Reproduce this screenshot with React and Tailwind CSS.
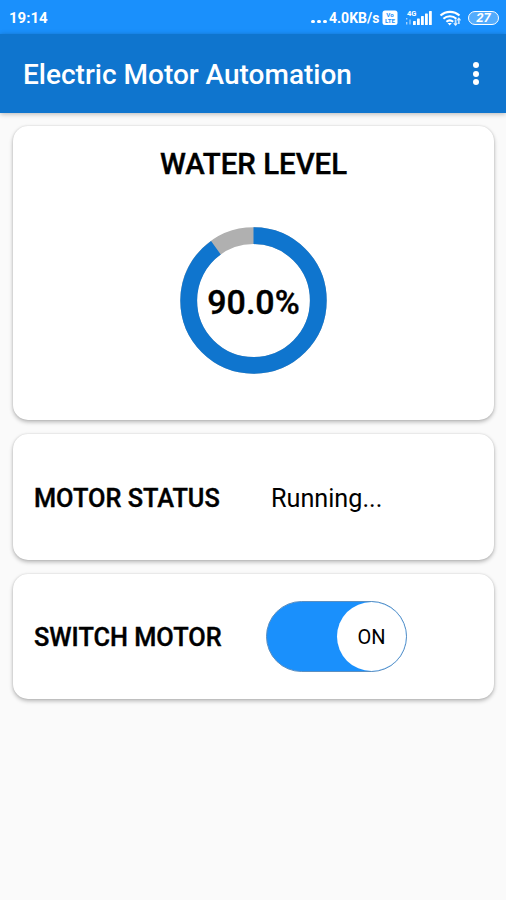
import React, { useState } from 'react';

const RING_RADIUS = 64.8;
const RING_LENGTH = 2 * Math.PI * RING_RADIUS;

const SignalIcon = () => (
  <svg width="28" height="18" viewBox="0 0 28 18" fill="#fff">
    <text x="2" y="6.8" fontSize="7.5" fontWeight="700" fontFamily="Roboto, sans-serif">4G</text>
    <path d="M1 9h1.4v1.6H1zM1 13h1.4v2.6H1zM4.4 10.5h1.2v5.1H4.4z" opacity="0.6" />
    <rect x="8" y="12" width="2.8" height="4" rx="0.6" />
    <rect x="12" y="9.5" width="2.8" height="6.5" rx="0.6" />
    <rect x="16" y="7" width="2.8" height="9" rx="0.6" />
    <rect x="20" y="4.5" width="2.8" height="11.5" rx="0.6" />
    <rect x="24" y="2" width="2.8" height="14" rx="0.6" />
  </svg>
);

const WifiIcon = () => (
  <svg width="24" height="18" viewBox="0 0 24 18" fill="none" stroke="#fff" strokeWidth="2.1">
    <path d="M1.5 6.6a14 14 0 0 1 19 0" />
    <path d="M4.4 9.8a9.6 9.6 0 0 1 13 0" />
    <path d="M7.4 12.8a5.2 5.2 0 0 1 6.8 0" />
    <path d="M8.6 14h4.2l-2.1 2.6z" fill="#fff" stroke="none" />
    <path d="M16.6 10.5v5.5M19.8 15v-5.5" strokeWidth="1.8" opacity="0.75" />
    <path d="M14.8 14.2l1.8 2 1.6-2M18.2 11.3l1.6-2 1.8 2" strokeWidth="1.2" opacity="0.75" />
  </svg>
);

const StatusBar = () => (
  <div className="flex h-[34px] items-center bg-[#1a90fc] pt-px pl-[9px] text-white">
    <span className="w-[302px] text-[15px] leading-[18px] font-bold">19:14</span>
    <span className="flex w-[18px] gap-[2.5px] pt-2">
      <span className="size-[3.5px] rounded-full bg-white" />
      <span className="size-[3.5px] rounded-full bg-white" />
      <span className="size-[3.5px] rounded-full bg-white" />
    </span>
    <span className="w-[53px] text-[14px] leading-[18px] font-bold whitespace-nowrap">4.0KB/s</span>
    <svg width="16" height="16" viewBox="0 0 16 16">
      <rect x="0.5" y="0.5" width="15" height="14.5" rx="2.5" fill="#fff" />
      <text x="8" y="7" textAnchor="middle" fontSize="6.2" fontWeight="700" fill="#1a90fc" fontFamily="Roboto, sans-serif">Vo</text>
      <text x="8" y="13.4" textAnchor="middle" fontSize="6.2" fontWeight="700" fill="#1a90fc" fontFamily="Roboto, sans-serif">LTE</text>
    </svg>
    <span className="ml-[7px]"><SignalIcon /></span>
    <span className="ml-[6px]"><WifiIcon /></span>
    <span className="ml-[5px] flex h-[14px] w-[31px] items-center justify-center rounded-full border-[1.5px] border-white bg-white/25 text-[13px] leading-none font-bold italic">
      27
    </span>
  </div>
);

const AppBar = () => (
  <header className="relative flex h-[79px] items-center justify-between bg-[#0f75ce] pr-[27px] pl-[23px] text-white shadow-[0_1px_5px_rgba(0,0,0,0.28)]">
    <h1 className="pt-[3px] text-[28px] leading-8 font-medium whitespace-nowrap">Electric Motor Automation</h1>
    <button className="flex flex-col gap-[2.5px]" aria-label="Menu">
      <span className="size-[6px] rounded-full bg-white" />
      <span className="size-[6px] rounded-full bg-white" />
      <span className="size-[6px] rounded-full bg-white" />
    </button>
  </header>
);

const Card = ({ className = '', children }) => (
  <section className={`rounded-[15px] bg-white shadow-[0_2px_4px_rgba(0,0,0,0.28),0_0_2px_rgba(0,0,0,0.12)] ${className}`}>
    {children}
  </section>
);

const WaterLevel = ({ level }) => (
  <div className="mt-[47px] grid place-items-center">
    <svg className="col-start-1 row-start-1 -rotate-90" width="147" height="147" viewBox="0 0 147 147" fill="none" strokeWidth="16.8">
      <circle cx="73.5" cy="73.5" r={RING_RADIUS} stroke="#b0b0b0" />
      <circle
        cx="73.5"
        cy="73.5"
        r={RING_RADIUS}
        stroke="#0f75ce"
        strokeDasharray={`${(RING_LENGTH * level) / 100} ${RING_LENGTH}`}
      />
    </svg>
    <span className="col-start-1 row-start-1 pt-[2px] text-[34px] leading-10 font-medium [-webkit-text-stroke:0.4px_#000]">
      {level.toFixed(1)}%
    </span>
  </div>
);

const App = () => {
  const [motorOn, setMotorOn] = useState(true);

  return (
    <div className="min-h-screen bg-[#fafafa] font-['Roboto',sans-serif] text-black">
      <StatusBar />
      <AppBar />

      <main className="flex flex-col gap-[14px] pt-[13px] pr-3 pl-[13px]">
        <Card className="h-[294px] pt-[22px]">
          <h2 className="text-center text-[29.4px] leading-8 font-medium [-webkit-text-stroke:0.4px_#000]">WATER LEVEL</h2>
          <WaterLevel level={90} />
        </Card>

        <Card className="flex h-[126px] items-center pt-1 pl-[21px]">
          <h2 className="w-[237px] text-[25.3px] font-medium [-webkit-text-stroke:0.4px_#000]">MOTOR STATUS</h2>
          <span className="text-[25.2px]">{motorOn ? 'Running...' : 'Stopped'}</span>
        </Card>

        <Card className="flex h-[125px] items-center pl-[21px]">
          <h2 className="w-[232px] pt-[2px] text-[25.3px] font-medium [-webkit-text-stroke:0.4px_#000]">SWITCH MOTOR</h2>
          <button
            onClick={() => setMotorOn(!motorOn)}
            className={`flex h-[71px] w-[141px] items-center rounded-full border border-[#5c8fc0] ${motorOn ? 'justify-end bg-[#1a90fc]' : 'justify-start bg-gray-400'}`}
          >
            <span className="flex size-[69px] items-center justify-center rounded-full bg-white pt-px text-[20px]">
              {motorOn ? 'ON' : 'OFF'}
            </span>
          </button>
        </Card>
      </main>
    </div>
  );
};

export default App;
